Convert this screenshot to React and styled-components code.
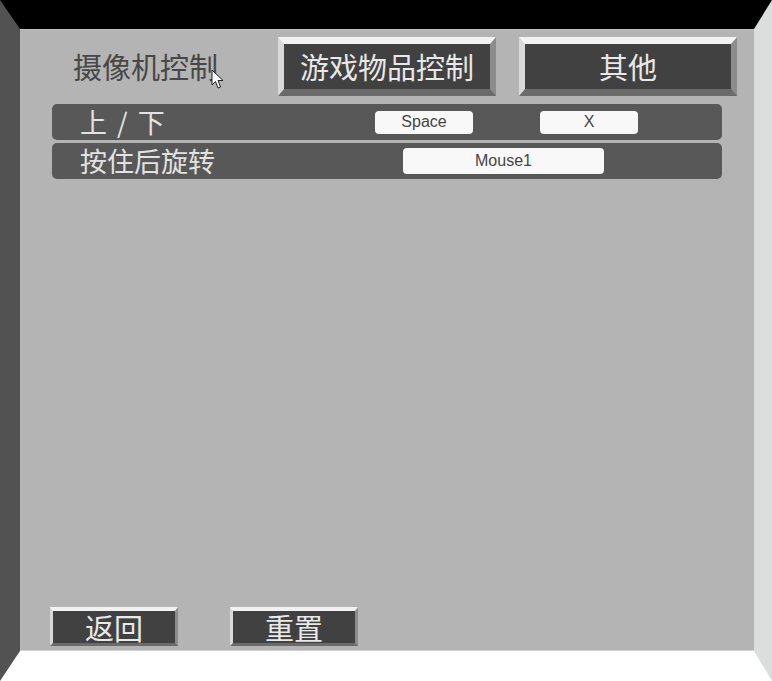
import React from "react";
import styled, { createGlobalStyle } from "styled-components";

const GlobalStyle = createGlobalStyle`
  html, body {
    margin: 0;
    padding: 0;
    background: #ffffff;
  }
  body {
    font-family: "Noto Sans CJK SC", "Noto Sans", sans-serif;
  }
`;

const Frame = styled.div`
  width: 772px;
  height: 681px;
  box-sizing: border-box;
  border-style: solid;
  border-width: 29px 18px 30px 20px;
  border-color: #000000 #dcdddd #ffffff #525252;
`;

const Panel = styled.div`
  position: relative;
  height: 100%;
  background: #b4b4b4;
  box-shadow: inset 0 1px 0 #c2c2c2, inset 0 -1px 0 #d2d2d2;
  display: flex;
  flex-direction: column;
`;

const Header = styled.div`
  display: flex;
  align-items: center;
  gap: 23px;
  height: 59px;
  margin-top: 8px;
  padding-left: 53px;
`;

const ActiveTab = styled.div`
  width: 182px;
  flex: none;
  font-size: 29px;
  line-height: 59px;
  color: #474747;
  white-space: nowrap;
`;

const TabButton = styled.button`
  width: 218px;
  height: 59px;
  flex: none;
  margin: 0;
  padding: 0;
  box-sizing: border-box;
  border-style: solid;
  border-width: 7px 6px 7px 6px;
  border-color: #f2f2f2 #8c8c8c #6b6b6b #d9d9d9;
  background: #414141;
  color: #e8e8e8;
  font-family: "Noto Sans CJK SC", sans-serif;
  font-size: 29px;
  line-height: 1;
  cursor: pointer;
`;

const Rows = styled.div`
  display: flex;
  flex-direction: column;
  gap: 3px;
  width: 670px;
  margin-top: 8px;
  margin-left: 32px;
`;

const Row = styled.div`
  display: flex;
  align-items: center;
  height: 36px;
  padding-left: 28px;
  background: #585858;
  border-radius: 5px;
`;

const RowLabel = styled.div`
  width: ${(p) => p.$width}px;
  flex: none;
  font-size: 27px;
  line-height: 36px;
  word-spacing: 4px;
  color: #e2e2e2;
  white-space: pre;
`;

const Key = styled.div`
  width: ${(p) => p.$width}px;
  height: ${(p) => p.$height}px;
  margin-right: ${(p) => p.$gap || 0}px;
  flex: none;
  display: flex;
  align-items: center;
  justify-content: center;
  background: #f8f8f8;
  border-radius: 4px;
  font-family: "Liberation Sans", Arial, sans-serif;
  font-size: 16px;
  color: #444444;
`;

const Footer = styled.div`
  display: flex;
  gap: 52px;
  margin-top: auto;
  padding-left: 30px;
  padding-bottom: 5px;
`;

const FooterButton = styled.button`
  width: 128px;
  height: 39px;
  flex: none;
  margin: 0;
  padding: 0;
  box-sizing: border-box;
  border-style: solid;
  border-width: 4px 3px 3px 3px;
  border-color: #f2f2f2 #8c8c8c #6b6b6b #d9d9d9;
  background: #414141;
  color: #e8e8e8;
  font-family: "Noto Sans CJK SC", sans-serif;
  font-size: 29px;
  line-height: 1;
  cursor: pointer;
`;

const Pointer = styled.svg`
  position: absolute;
  left: 191px;
  top: 40px;
  pointer-events: none;
`;

const tabs = ["游戏物品控制", "其他"];

export default function App() {
  return (
    <>
      <GlobalStyle />
      <Frame>
        <Panel>
          <Header>
            <ActiveTab>摄像机控制</ActiveTab>
            {tabs.map((t) => (
              <TabButton key={t}>{t}</TabButton>
            ))}
          </Header>

          <Rows>
            <Row>
              <RowLabel $width={295}>上 / 下</RowLabel>
              <Key $width={98} $height={23} $gap={67}>Space</Key>
              <Key $width={98} $height={23}>X</Key>
            </Row>
            <Row>
              <RowLabel $width={323}>按住后旋转</RowLabel>
              <Key $width={201} $height={26}>Mouse1</Key>
            </Row>
          </Rows>

          <Footer>
            <FooterButton>返回</FooterButton>
            <FooterButton>重置</FooterButton>
          </Footer>

          <Pointer width="13" height="21" viewBox="0 0 13 21">
            <path
              d="M1 1 L1 16 L4.5 12.5 L7 19 L9.5 18 L7 11.5 L12 11.5 Z"
              fill="#ffffff"
              stroke="#222222"
              strokeWidth="1"
              strokeLinejoin="miter"
            />
          </Pointer>
        </Panel>
      </Frame>
    </>
  );
}
